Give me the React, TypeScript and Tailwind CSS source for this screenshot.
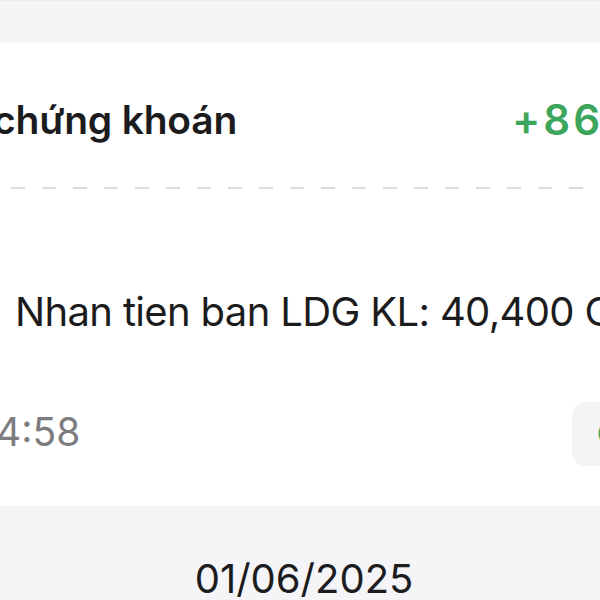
import React from "react";

export default function App() {
  return (
    <div className="w-[600px] h-[600px] overflow-hidden bg-white flex flex-col font-['Inter','Noto_Sans',sans-serif] text-[#1c1c1e]">
      <div className="h-[43px] shrink-0 bg-[#f5f5f7] border-t border-[#ececef]" />

      <div className="mt-[53px] flex items-center whitespace-nowrap">
        <span className="-ml-[7px] w-[519px] shrink-0 text-[39px] leading-[48px] font-semibold tracking-[-0.2px]">chứng khoán</span>
        <span className="shrink-0 text-[42px] leading-[48px] font-semibold tracking-[3px] text-[#3ea55c]">+86,000</span>
      </div>

      <div className="mt-[43px] ml-[11px] h-[2px] shrink-0 bg-[repeating-linear-gradient(90deg,#dcdcdf_0_14px,transparent_14px_31px)]" />

      <div className="mt-[99px] pl-[15px] whitespace-nowrap text-[40px] leading-[48px] tracking-[-0.65px]">
        Nhan tien ban LDG KL: 40,400 Gia: 5,250
      </div>

      <div className="mt-[66px] flex items-center whitespace-nowrap">
        <span className="-ml-[4px] w-[576px] shrink-0 pb-[4px] text-[39px] leading-[48px] text-[#7c7c80]">4:58</span>
        <div className="h-[64px] w-[148px] shrink-0 rounded-[14px] bg-[#f4f4f6] flex items-center pl-[25px]">
          <span className="text-[28px] font-medium text-[#3ea55c]">Chi tiết</span>
        </div>
      </div>

      <div className="mt-[40px] flex-1 bg-[#f5f5f7] flex justify-center pl-[8px]">
        <span className="mt-[49px] text-[40px] leading-[48px] whitespace-nowrap">01/06/2025</span>
      </div>
    </div>
  );
}
